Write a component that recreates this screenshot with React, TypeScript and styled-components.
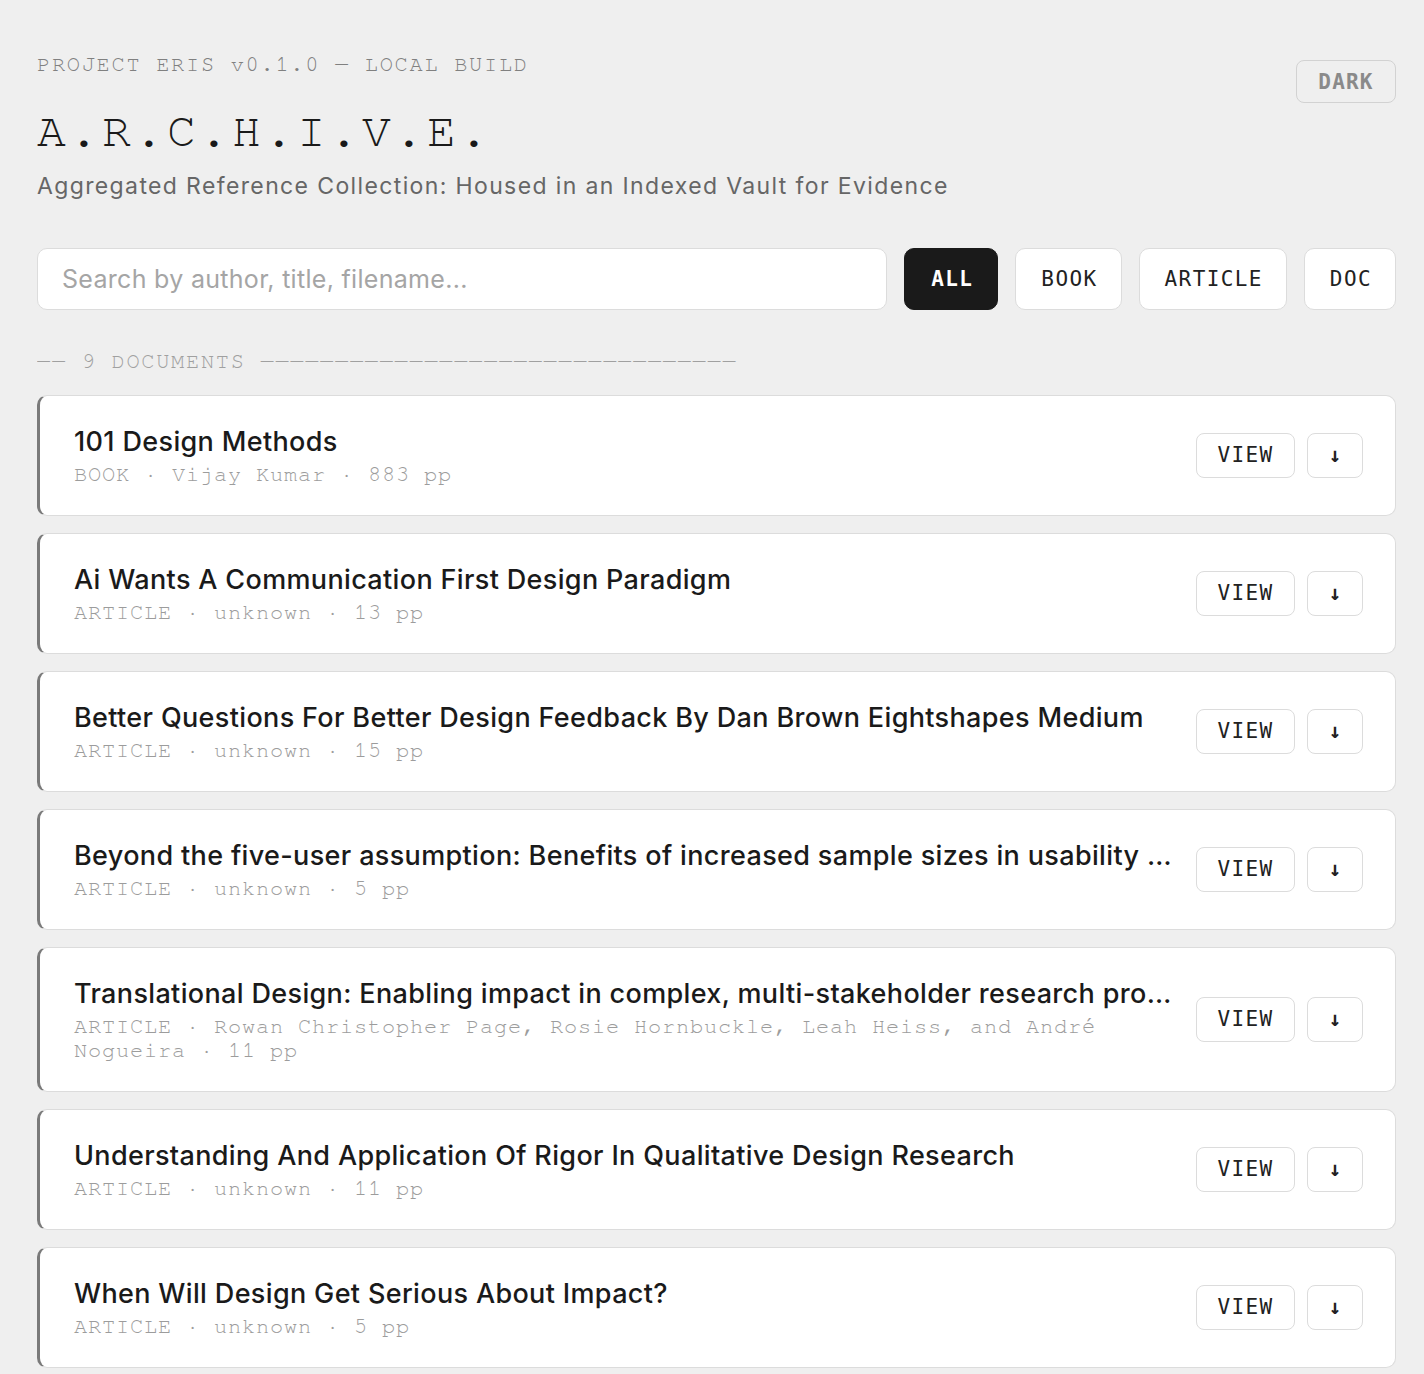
import styled, { createGlobalStyle, css } from "styled-components";
import { useState } from "react";

const GlobalStyle = createGlobalStyle`
    html, body {
        margin: 0;
        padding: 0;
        background: #efefef;
    }
    * {
        box-sizing: border-box;
    }
`;

// a serif typewriter mono where the machine has one, Liberation Mono otherwise
const mono = `"Nimbus Mono PS", "Nimbus Mono L", FreeMono, Courier, "Liberation Mono", monospace`;
const uiMono = `"DejaVu Sans Mono", Menlo, monospace`;
const sans = `Inter, "Noto Sans", Arial, sans-serif`;

type Doc = {
    title: string;
    kind: "BOOK" | "ARTICLE" | "DOC";
    author: string;
    pages: number;
};

const docs: Doc[] = [
    { title: "101 Design Methods", kind: "BOOK", author: "Vijay Kumar", pages: 883 },
    { title: "Ai Wants A Communication First Design Paradigm", kind: "ARTICLE", author: "unknown", pages: 13 },
    { title: "Better Questions For Better Design Feedback By Dan Brown Eightshapes Medium", kind: "ARTICLE", author: "unknown", pages: 15 },
    { title: "Beyond the five-user assumption: Benefits of increased sample sizes in usability testing", kind: "ARTICLE", author: "unknown", pages: 5 },
    { title: "Translational Design: Enabling impact in complex, multi-stakeholder research projects", kind: "ARTICLE", author: "Rowan Christopher Page, Rosie Hornbuckle, Leah Heiss, and André Nogueira", pages: 11 },
    { title: "Understanding And Application Of Rigor In Qualitative Design Research", kind: "ARTICLE", author: "unknown", pages: 11 },
    { title: "When Will Design Get Serious About Impact?", kind: "ARTICLE", author: "unknown", pages: 5 },
    { title: "Why Usability Testing Matters", kind: "ARTICLE", author: "unknown", pages: 8 },
    { title: "Working Notes", kind: "DOC", author: "unknown", pages: 3 },
];

const Page = styled.div`
    padding: 47px 28px 40px 37px;
`;

const Header = styled.header`
    display: flex;
    justify-content: space-between;
    align-items: flex-start;
`;

const Brand = styled.div`
    display: flex;
    flex-direction: column;
`;

const BuildTag = styled.div`
    font-family: ${mono};
    font-size: 22px;
    line-height: 34px;
    letter-spacing: 1.7px;
    color: #808080;
`;

const Title = styled.h1`
    margin: 23px 0 0;
    font-family: ${mono};
    font-weight: 400;
    font-size: 48px;
    line-height: 56px;
    letter-spacing: 3.7px;
    color: #1a1a1a;
`;

const Subtitle = styled.p`
    margin: 11px 0 0;
    font-family: ${sans};
    font-size: 23px;
    line-height: 30px;
    letter-spacing: 1.37px;
    color: #666;
`;

const ThemeToggle = styled.button`
    margin-top: 13px;
    width: 100px;
    height: 43px;
    border: 1px solid #d2d2d2;
    border-radius: 8px;
    background: transparent;
    font-family: ${uiMono};
    font-weight: 600;
    font-size: 21px;
    letter-spacing: 1.2px;
    color: #8a8a8a;
    cursor: pointer;
`;

const Toolbar = styled.div`
    display: flex;
    gap: 17px;
    margin-top: 47px;
`;

const Search = styled.input`
    flex: 1;
    height: 62px;
    padding: 0 24px;
    border: 1px solid #dcdcdc;
    border-radius: 10px;
    background: #fff;
    font-family: ${sans};
    font-size: 25px;
    letter-spacing: 0.3px;
    color: #222;
    outline: none;

    &::placeholder {
        color: #a5a5a5;
    }
`;

const FilterButton = styled.button<{ $active?: boolean }>`
    height: 62px;
    padding: 0 23px 0 25px;
    border: 1px solid #dcdcdc;
    border-radius: 10px;
    background: #fff;
    font-family: ${uiMono};
    font-size: 21px;
    letter-spacing: 1.4px;
    color: #222;
    cursor: pointer;

    ${({ $active }) => $active && css`
        padding: 0 24px 0 26px;
        background: #1a1a1a;
        border-color: #1a1a1a;
        color: #fff;
        font-weight: 600;
    `}
`;

const CountLine = styled.div`
    margin: 34px 0 17px;
    font-family: ${mono};
    font-size: 22px;
    line-height: 34px;
    letter-spacing: 1.7px;
    color: #a0a0a0;
    white-space: nowrap;
    overflow: hidden;
`;

const List = styled.div`
    display: flex;
    flex-direction: column;
    gap: 17px;
`;

const Card = styled.div`
    display: flex;
    align-items: center;
    gap: 24px;
    padding: 28px 32px 29px 34px;
    background: #fff;
    border: 1px solid #dcdcdc;
    border-left: 3px solid #7a7a7a;
    border-radius: 10px;
`;

const CardBody = styled.div`
    flex: 1;
    min-width: 0;
`;

const DocTitle = styled.div`
    font-family: ${sans};
    font-weight: 500;
    font-size: 27px;
    line-height: 36px;
    letter-spacing: 0.35px;
    color: #1a1a1a;
    white-space: nowrap;
    overflow: hidden;
    text-overflow: ellipsis;
`;

const Meta = styled.div`
    margin-top: 2px;
    font-family: ${mono};
    font-size: 22px;
    line-height: 24px;
    letter-spacing: 0.8px;
    color: #9c9c9c;
`;

const Actions = styled.div`
    display: flex;
    gap: 12px;
    flex-shrink: 0;
`;

const ActionButton = styled.button<{ $icon?: boolean }>`
    height: 45px;
    width: ${({ $icon }) => ($icon ? "56px" : "99px")};
    padding: 0;
    border: 1px solid #dcdcdc;
    border-radius: 8px;
    background: #fff;
    font-family: ${uiMono};
    font-size: 21px;
    font-weight: ${({ $icon }) => ($icon ? 700 : 400)};
    letter-spacing: ${({ $icon }) => ($icon ? "0" : "1.4px")};
    color: #222;
    cursor: pointer;
`;

const filters = ["ALL", "BOOK", "ARTICLE", "DOC"];

export default function App() {
    const [filter, setFilter] = useState("ALL");
    const [query, setQuery] = useState("");

    const q = query.toLowerCase();
    const shown = docs.filter(
        (d) =>
            (filter === "ALL" || d.kind === filter) &&
            (d.title.toLowerCase().includes(q) || d.author.toLowerCase().includes(q))
    );

    return (
        <>
            <GlobalStyle />
            <Page>
                <Header>
                    <Brand>
                        <BuildTag>PROJECT ERIS v0.1.0 — LOCAL BUILD</BuildTag>
                        <Title>A.R.C.H.I.V.E.</Title>
                        <Subtitle>
                            Aggregated Reference Collection: Housed in an Indexed Vault for Evidence
                        </Subtitle>
                    </Brand>
                    <ThemeToggle>DARK</ThemeToggle>
                </Header>

                <Toolbar>
                    <Search
                        placeholder="Search by author, title, filename..."
                        value={query}
                        onChange={(e) => setQuery(e.target.value)}
                    />
                    {filters.map((f) => (
                        <FilterButton key={f} $active={filter === f} onClick={() => setFilter(f)}>
                            {f}
                        </FilterButton>
                    ))}
                </Toolbar>

                <CountLine>
                    —— {shown.length} DOCUMENTS ————————————————————————————————
                </CountLine>

                <List>
                    {shown.map((d) => (
                        <Card key={d.title}>
                            <CardBody>
                                <DocTitle>{d.title}</DocTitle>
                                <Meta>
                                    {d.kind} · {d.author} · {d.pages} pp
                                </Meta>
                            </CardBody>
                            <Actions>
                                <ActionButton>VIEW</ActionButton>
                                <ActionButton $icon>↓</ActionButton>
                            </Actions>
                        </Card>
                    ))}
                </List>
            </Page>
        </>
    );
}
